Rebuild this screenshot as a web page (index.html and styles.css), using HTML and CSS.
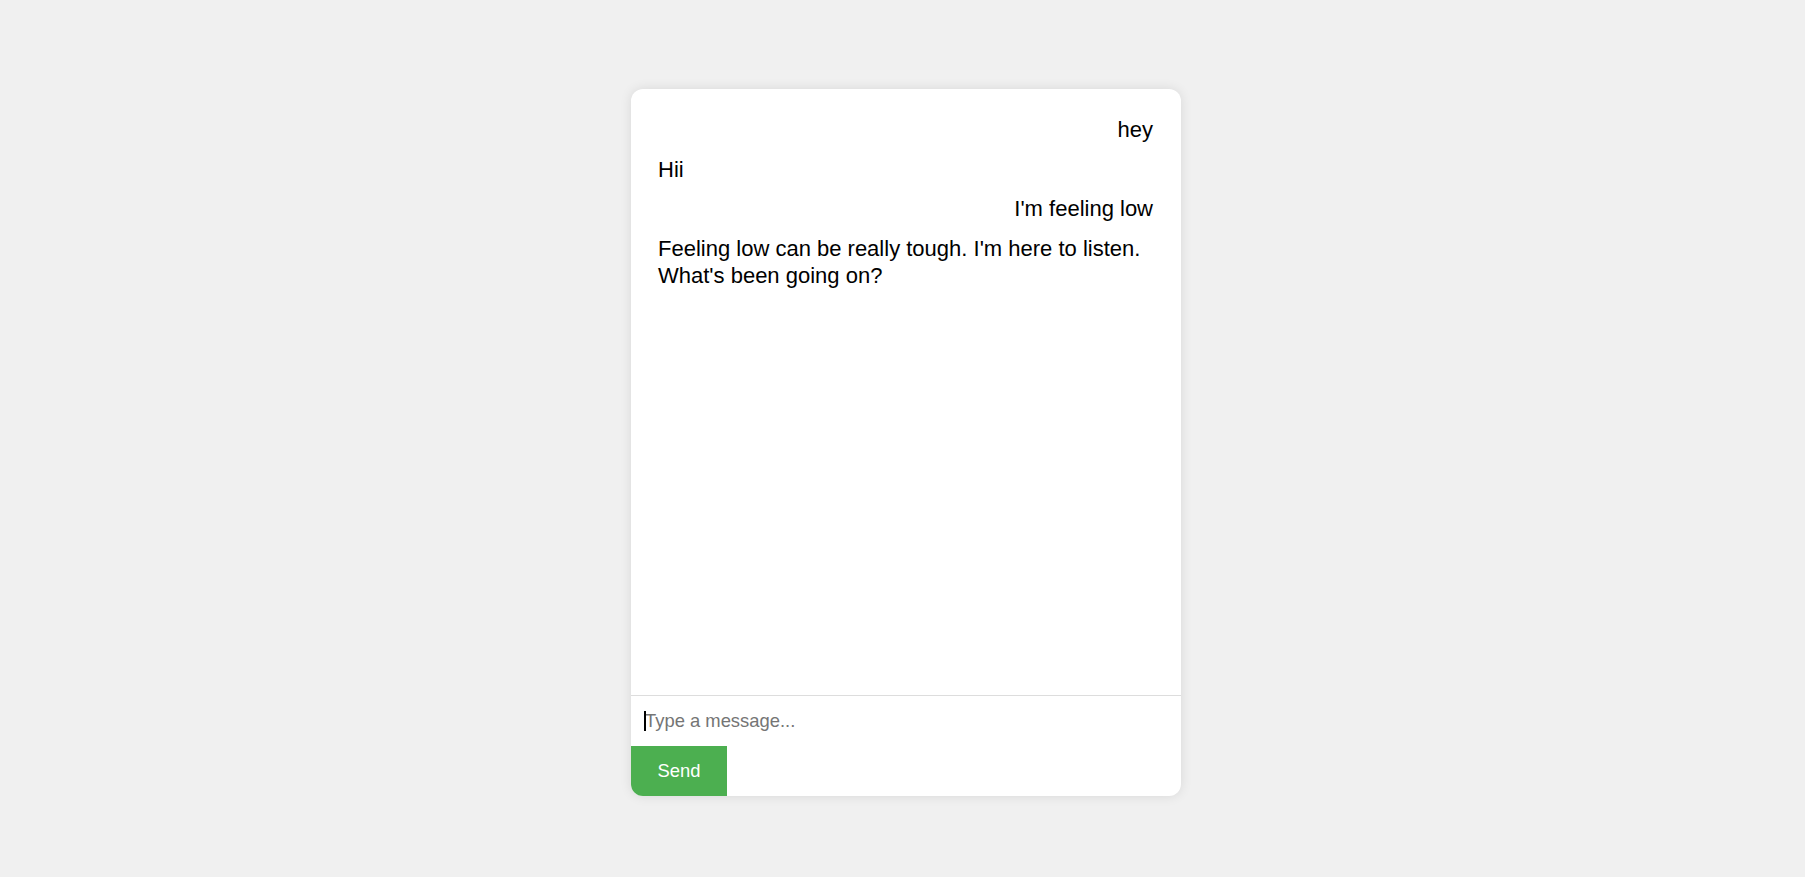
FILE: index.html
```html
<!DOCTYPE html>
<html lang="en">
<head>
<meta charset="utf-8">
<title>Chat</title>
<link rel="stylesheet" href="styles.css">
</head>
<body>
  <div class="chat-card">
    <div class="messages">
      <div class="msg user">hey</div>
      <div class="msg bot">Hii</div>
      <div class="msg user">I'm feeling low</div>
      <div class="msg bot">Feeling low can be really tough. I'm here to listen. What's been going on?</div>
    </div>
    <div class="composer">
      <div class="input-wrap">
        <input class="composer-input" type="text" placeholder="Type a message...">
        <span class="caret"></span>
      </div>
      <button class="send-btn" type="button">Send</button>
    </div>
  </div>
</body>
</html>
```

FILE: styles.css
```css
html, body {
  margin: 0;
  height: 100%;
}
body {
  background: #f0f0f0;
  font-family: "Liberation Sans", Arial, sans-serif;
  display: flex;
  justify-content: center;
  align-items: flex-start;
  padding: 89px 0 0 7px;
  box-sizing: border-box;
}
.chat-card {
  width: 550px;
  height: 707px;
  background: #fff;
  border-radius: 12px;
  box-shadow: 0 0 12px rgba(0, 0, 0, 0.1);
  overflow: hidden;
  display: flex;
  flex-direction: column;
}
.messages {
  flex: 1;
  padding: 27px 28px 0 27px;
  display: flex;
  flex-direction: column;
  gap: 12px;
  overflow: hidden;
}
.msg {
  font-size: 22px;
  line-height: 27.6px;
  color: #000;
}
.msg.user {
  text-align: right;
}
.msg.bot {
  text-align: left;
}
.composer {
  border-top: 1px solid #ddd;
  display: flex;
  flex-direction: column;
  align-items: flex-start;
}
.input-wrap {
  position: relative;
  width: 100%;
}
.composer-input {
  display: block;
  width: 100%;
  height: 50px;
  box-sizing: border-box;
  border: none;
  outline: none;
  padding: 0 14px;
  font-family: "Liberation Sans", Arial, sans-serif;
  font-size: 18.4px;
  color: #000;
  background: #fff;
}
.composer-input::placeholder {
  color: #757575;
}
.caret {
  position: absolute;
  left: 13px;
  top: 15px;
  width: 2px;
  height: 20px;
  background: #000;
}
.send-btn {
  width: 96px;
  height: 50px;
  border: none;
  background: #4caf50;
  color: #fff;
  font-family: "Liberation Sans", Arial, sans-serif;
  font-size: 18.4px;
  padding: 0;
  cursor: pointer;
}
```
